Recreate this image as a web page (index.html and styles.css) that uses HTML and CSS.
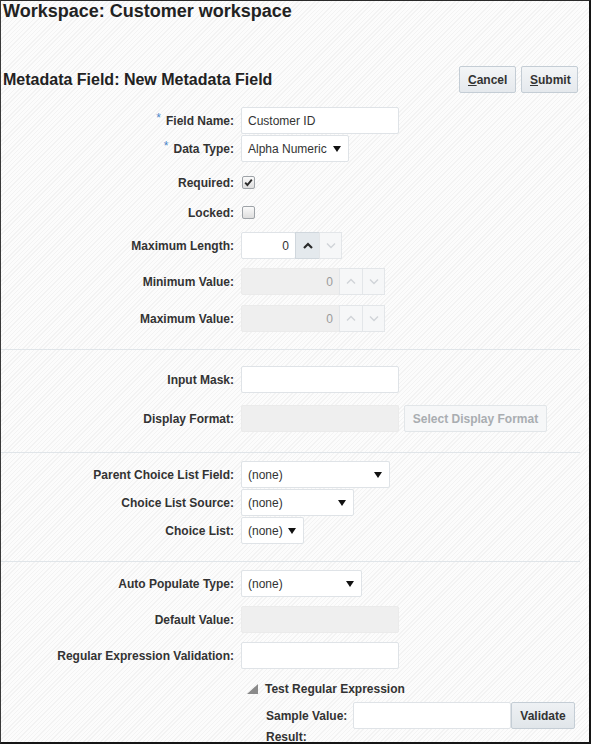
FILE: index.html
```html
<!DOCTYPE html>
<html>
<head>
<meta charset="utf-8">
<link rel="stylesheet" href="styles.css">
</head>
<body>
<div class="frame">
  <h1 class="ws-title">Workspace: Customer workspace</h1>
  <div class="header">
    <h2 class="md-title">Metadata Field: New Metadata Field</h2>
    <div class="actions">
      <button class="btn"><u>C</u>ancel</button>
      <button class="btn"><u>S</u>ubmit</button>
    </div>
  </div>

  <div class="form">
    <div class="row m14">
      <label class="lbl"><span class="req">*</span>Field Name:</label>
      <div class="field w158">Customer ID</div>
    </div>
    <div class="row m1">
      <label class="lbl"><span class="req">*</span>Data Type:</label>
      <div class="field select w108"><span>Alpha Numeric</span><svg class="arr" width="8" height="6" viewBox="0 0 8 6"><path d="M0 0H8L4 6Z" fill="#111"/></svg></div>
    </div>
    <div class="row m7">
      <label class="lbl">Required:</label>
      <span class="cb"><svg width="11" height="11" viewBox="0 0 11 11"><path d="M2.2 5.6L4.4 8L8.8 2.6" fill="none" stroke="#2b2b2b" stroke-width="1.9"/></svg></span>
    </div>
    <div class="row m3">
      <label class="lbl">Locked:</label>
      <span class="cb"></span>
    </div>
    <div class="row m6">
      <label class="lbl">Maximum Length:</label>
      <div class="spin">
        <div class="field num w55">0</div>
        <span class="sbtn active w25"><svg width="10" height="7" viewBox="0 0 10 7"><path d="M1 6L5 2L9 6" fill="none" stroke="#2a2a2a" stroke-width="2.2"/></svg></span>
        <span class="sbtn w23"><svg width="10" height="7" viewBox="0 0 10 7"><path d="M1 1.5L5 5.5L9 1.5" fill="none" stroke="#d0d4d8" stroke-width="1.4"/></svg></span>
      </div>
    </div>
    <div class="row m9">
      <label class="lbl">Minimum Value:</label>
      <div class="spin">
        <div class="field num dis w99">0</div>
        <span class="sbtn w24"><svg width="10" height="7" viewBox="0 0 10 7"><path d="M1 5.5L5 1.5L9 5.5" fill="none" stroke="#d0d4d8" stroke-width="1.4"/></svg></span>
        <span class="sbtn w23"><svg width="10" height="7" viewBox="0 0 10 7"><path d="M1 1.5L5 5.5L9 1.5" fill="none" stroke="#d0d4d8" stroke-width="1.4"/></svg></span>
      </div>
    </div>
    <div class="row m10">
      <label class="lbl">Maximum Value:</label>
      <div class="spin">
        <div class="field num dis w99">0</div>
        <span class="sbtn w24"><svg width="10" height="7" viewBox="0 0 10 7"><path d="M1 5.5L5 1.5L9 5.5" fill="none" stroke="#d0d4d8" stroke-width="1.4"/></svg></span>
        <span class="sbtn w23"><svg width="10" height="7" viewBox="0 0 10 7"><path d="M1 1.5L5 5.5L9 1.5" fill="none" stroke="#d0d4d8" stroke-width="1.4"/></svg></span>
      </div>
    </div>

    <div class="sep m17"></div>

    <div class="row m16">
      <label class="lbl">Input Mask:</label>
      <div class="field w158"></div>
    </div>
    <div class="row m12">
      <label class="lbl">Display Format:</label>
      <div class="field dis w158"></div>
      <button class="btn btn-dis">Select Display Format</button>
    </div>

    <div class="sep m20"></div>

    <div class="row m8">
      <label class="lbl">Parent Choice List Field:</label>
      <div class="field select w149"><span>(none)</span><svg class="arr" width="8" height="6" viewBox="0 0 8 6"><path d="M0 0H8L4 6Z" fill="#111"/></svg></div>
    </div>
    <div class="row m1">
      <label class="lbl">Choice List Source:</label>
      <div class="field select w113"><span>(none)</span><svg class="arr" width="8" height="6" viewBox="0 0 8 6"><path d="M0 0H8L4 6Z" fill="#111"/></svg></div>
    </div>
    <div class="row m1">
      <label class="lbl">Choice List:</label>
      <div class="field select w63"><span>(none)</span><svg class="arr" width="8" height="6" viewBox="0 0 8 6"><path d="M0 0H8L4 6Z" fill="#111"/></svg></div>
    </div>

    <div class="sep m17"></div>

    <div class="row m8">
      <label class="lbl">Auto Populate Type:</label>
      <div class="field select w120"><span>(none)</span><svg class="arr" width="8" height="6" viewBox="0 0 8 6"><path d="M0 0H8L4 6Z" fill="#111"/></svg></div>
    </div>
    <div class="row m9">
      <label class="lbl">Default Value:</label>
      <div class="field dis w158"></div>
    </div>
    <div class="row m9">
      <label class="lbl">Regular Expression Validation:</label>
      <div class="field w158"></div>
    </div>

    <div class="test">
      <div class="test-head">
        <svg width="11" height="10" viewBox="0 0 11 10"><path d="M11 0V10H0Z" fill="#8a8a8a"/></svg>
        <span>Test Regular Expression</span>
      </div>
      <div class="sample">
        <label class="slbl">Sample Value:</label>
        <div class="field w158"></div>
        <button class="btn btn-val">Validate</button>
      </div>
      <div class="result">Result:</div>
    </div>
  </div>
</div>
</body>
</html>
```

FILE: styles.css
```css
html, body {
  margin: 0;
  padding: 0;
}
body {
  font-family: "Liberation Sans", Arial, sans-serif;
  font-size: 12px;
  color: #333;
}
.frame {
  box-sizing: border-box;
  width: 591px;
  height: 744px;
  border-left: 1px solid #3a3a3a;
  border-top: 1px solid #2a2a2a;
  border-right: 2px solid #151515;
  border-bottom: 2px solid #151515;
  background: repeating-linear-gradient(-45deg, #f3f3f3 0 1px, #fcfcfc 1px 3px);
  overflow: hidden;
}
.ws-title {
  margin: 0;
  padding-left: 2px;
  font-size: 18px;
  line-height: 21px;
  font-weight: bold;
  color: #222;
}
.header {
  display: flex;
  align-items: center;
  justify-content: space-between;
  margin-top: 44px;
  padding: 0 11px 0 2px;
  height: 27px;
}
.md-title {
  margin: 0;
  font-size: 16px;
  font-weight: bold;
  color: #222;
  line-height: 27px;
  padding-top: 0;
}
.actions {
  display: flex;
  gap: 5px;
}
.btn {
  box-sizing: border-box;
  height: 27px;
  padding: 0 8px;
  font-family: "Liberation Sans", Arial, sans-serif;
  font-size: 12px;
  font-weight: bold;
  color: #333;
  border: 1px solid #c4cdd5;
  border-radius: 2px;
  background: linear-gradient(#f3f5f7, #e5e9ed);
  white-space: nowrap;
}
.actions .btn {
  width: 57px;
}
.form {
  display: flex;
  flex-direction: column;
}
.row {
  display: flex;
  align-items: center;
  height: 27px;
}
.lbl {
  box-sizing: border-box;
  width: 233px;
  margin-right: 7px;
  text-align: right;
  font-weight: bold;
  color: #333;
  white-space: nowrap;
}
.req {
  color: #4a86c8;
  font-weight: normal;
  position: relative;
  top: -3px;
  margin-right: 5px;
}
.field {
  box-sizing: border-box;
  height: 27px;
  border: 1px solid #dfe3e7;
  border-radius: 2px;
  background: #fff;
  padding: 0 6px;
  display: flex;
  align-items: center;
  color: #333;
  white-space: nowrap;
  flex: none;
}
.select {
  justify-content: space-between;
  padding-right: 7px;
}
.arr {
  flex: none;
}
.num {
  justify-content: flex-end;
  padding-right: 6px;
}
.dis {
  background: #efefef;
  border-color: #ebebeb;
  color: #9b9b9b;
}
.w158 { width: 158px; }
.w149 { width: 149px; }
.w120 { width: 121px; }
.w113 { width: 113px; }
.w108 { width: 108px; }
.w99 { width: 99px; }
.w63 { width: 63px; }
.w55 { width: 55px; }
.w25 { width: 25px; }
.w24 { width: 24px; }
.w23 { width: 23px; }

.cb {
  box-sizing: border-box;
  width: 13px;
  height: 13px;
  margin-left: 1px;
  border: 1px solid #9ea3a8;
  border-radius: 2px;
  background: linear-gradient(#fafafa, #dedede);
  display: flex;
  align-items: center;
  justify-content: center;
}
.spin {
  display: flex;
}
.sbtn {
  box-sizing: border-box;
  height: 27px;
  border: 1px solid #e3e6e9;
  background: #f6f7f8;
  display: flex;
  align-items: center;
  justify-content: center;
  margin-left: -1px;
}
.sbtn.active {
  background: #e4e9ed;
  border-color: #d0d7dd;
}
.sep {
  height: 0;
  border-top: 1px solid #e0e5e9;
  margin-right: 9px;
}
.m1 { margin-top: 1px; }
.m3 { margin-top: 3px; }
.m6 { margin-top: 6px; }
.m7 { margin-top: 7px; }
.m8 { margin-top: 8px; }
.m9 { margin-top: 9px; }
.m10 { margin-top: 10px; }
.m12 { margin-top: 12px; }
.m14 { margin-top: 14px; }
.m16 { margin-top: 16px; }
.m17 { margin-top: 17px; }
.m20 { margin-top: 20px; }

.btn-dis {
  width: 143px;
  padding: 0;
  margin-left: 5px;
  color: #a9adb1;
  background: #f6f7f8;
  border-color: #e2e6e9;
}
.test {
  margin-left: 246px;
  margin-top: 12px;
}
.test-head {
  display: flex;
  align-items: center;
  gap: 7px;
  height: 16px;
  font-weight: bold;
  color: #333;
}
.sample {
  display: flex;
  align-items: center;
  margin-top: 5px;
  padding-left: 19px;
}
.slbl {
  font-weight: bold;
  color: #333;
  width: 81px;
  margin-right: 6px;
  white-space: nowrap;
}
.btn-val {
  width: 64px;
  margin-left: 0;
  padding: 0;
  background: linear-gradient(#eef1f4, #e1e6ea);
}
.result {
  padding-left: 19px;
  margin-top: 1px;
  font-weight: bold;
  line-height: 14px;
}
```
